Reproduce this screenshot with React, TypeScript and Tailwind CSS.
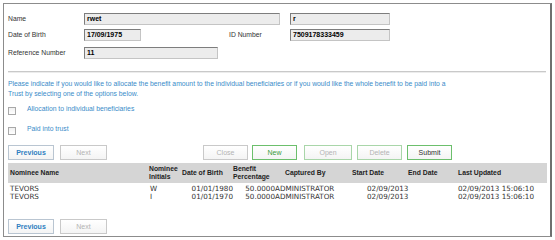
import { ReactNode } from 'react'

type Row = { name: string; initials: string; dob: string; pct: string; by: string; start: string; end: string; updated: string }

const rows: Row[] = [
  { name: 'TEVORS', initials: 'W', dob: '01/01/1980', pct: '50.0000', by: 'ADMINISTRATOR', start: '02/09/2013', end: '', updated: '02/09/2013 15:06:10' },
  { name: 'TEVORS', initials: 'I', dob: '01/01/1970', pct: '50.0000', by: 'ADMINISTRATOR', start: '02/09/2013', end: '', updated: '02/09/2013 15:06:10' },
]

const arial = "font-['Liberation_Sans',Arial,sans-serif]"
const verdana = "font-['DejaVu_Sans',Verdana,sans-serif]"

function Field({ value, w }: { value: string; w: string }) {
  return (
    <div
      className={`${w} h-[12px] border border-[#c4c4c4] border-t-[#7d7d7d] border-l-[#7d7d7d] bg-[#ececec] pl-[2px] text-[7px] font-bold leading-[10px] text-black`}
    >
      {value}
    </div>
  )
}

function Btn({ children, tone, w = 'w-[46px]' }: { children: ReactNode; tone: 'blue' | 'grey' | 'green' | 'pale' | 'dark'; w?: string }) {
  const styles = {
    blue: 'border-[#b9c5d1] text-[#2f7fc1] font-bold',
    grey: 'border-[#c9c9c9] text-[#b3b3b3]',
    green: 'border-[#6cbf6c] text-[#3d9b3d]',
    pale: 'border-[#a9d6a9] text-[#b3b3b3]',
    dark: 'border-[#6cbf6c] text-[#2e2e2e]',
  }[tone]
  return (
    <button
      type="button"
      className={`${w} h-[15px] border bg-gradient-to-b from-white to-[#f4f4f4] text-[7px] leading-[13px] ${styles}`}
    >
      {children}
    </button>
  )
}

function Check({ label, mt }: { label: string; mt: string }) {
  return (
    <div className={`flex items-start ${mt}`}>
      <span className="h-[8px] w-[8px] border border-[#a8a8a8] bg-gradient-to-b from-[#f0f0f0] to-white" />
      <span className="ml-[11px] -mt-[3px] text-[6.8px] leading-[9px] text-[#3a8cc9]">{label}</span>
    </div>
  )
}

export default function App() {
  return (
    <div className={`h-[240px] w-[555px] bg-white pl-[3px] pt-[3px] ${arial}`}>
      <div className="h-[234px] w-[549px] border border-[#8c8c8c] border-r-[#6f6f6f] border-r-2 px-[4px]">
        {/* applicant details */}
        <div className="pt-[9px] text-[6.8px] text-[#333333]">
          <div className="flex items-center">
            <span className="w-[76px]">Name</span>
            <Field value="rwet" w="w-[196px]" />
            <span className="w-[10px]" />
            <Field value="r" w="w-[100px]" />
          </div>
          <div className="mt-[4px] flex items-center">
            <span className="w-[76px]">Date of Birth</span>
            <Field value="17/09/1975" w="w-[57px]" />
            <span className="ml-[88px] w-[61px]">ID Number</span>
            <Field value="7509178333459" w="w-[100px]" />
          </div>
          <div className="mt-[6px] flex items-center">
            <span className="w-[76px]">Reference Number</span>
            <Field value="11" w="w-[134px]" />
          </div>
        </div>

        <div className="mt-[12px] h-[2px] border-t border-[#c9c9c9] bg-[#ececec]" />

        <p className="mt-[6px] text-[6.8px] leading-[9.5px] text-[#3a8cc9]">
          Please indicate if you would like to allocate the benefit amount to the individual beneficiaries or if you would like the whole benefit to be paid into a
          <br />
          Trust by selecting one of the options below.
        </p>

        <Check label="Allocation to individual beneficiaries" mt="mt-[9px]" />
        <Check label="Paid into trust" mt="mt-[12px]" />

        <div className="mt-[10px] flex">
          <Btn tone="blue">Previous</Btn>
          <span className="w-[6px]" />
          <Btn tone="grey" w="w-[47px]">Next</Btn>
          <span className="w-[96px]" />
          <Btn tone="grey" w="w-[45px]">Close</Btn>
          <span className="w-[4px]" />
          <Btn tone="green" w="w-[45px]">New</Btn>
          <span className="w-[7px]" />
          <Btn tone="pale" w="w-[48px]">Open</Btn>
          <span className="w-[5px]" />
          <Btn tone="pale" w="w-[45px]">Delete</Btn>
          <span className="w-[5px]" />
          <Btn tone="dark" w="w-[45px]">Submit</Btn>
        </div>

        {/* nominees */}
        <table className="mt-[3px] w-[539px] table-fixed border-collapse text-left">
          <colgroup>
            <col className="w-[141px]" />
            <col className="w-[33px]" />
            <col className="w-[51px]" />
            <col className="w-[42px]" />
            <col className="w-[77px]" />
            <col className="w-[56px]" />
            <col className="w-[50px]" />
            <col className="w-[89px]" />
          </colgroup>
          <thead>
            <tr className="h-[20px] bg-[#d5d5d5] text-[6.8px] font-bold leading-[8px] text-[#222222]">
              <th className="pl-[2px] align-middle">Nominee Name</th>
              <th className="align-middle">Nominee<br />Initials</th>
              <th className="align-middle">Date of Birth</th>
              <th className="align-middle">Benefit<br />Percentage</th>
              <th className="pl-[10px] align-middle">Captured By</th>
              <th className="align-middle">Start Date</th>
              <th className="align-middle">End Date</th>
              <th className="align-middle">Last Updated</th>
            </tr>
          </thead>
          <tbody className={`${verdana} text-[7.2px] leading-[7px] text-[#333333]`}>
            {rows.map((r, i) => (
              <tr key={i} className={i === 0 ? 'h-[9px] align-bottom' : 'h-[8px] align-bottom'}>
                <td className="pl-[2px] whitespace-nowrap">{r.name}</td>
                <td className="pl-[1px]">{r.initials}</td>
                <td className="text-right whitespace-nowrap">{r.dob}</td>
                <td className="text-right">{r.pct}</td>
                <td className="whitespace-nowrap">{r.by}</td>
                <td className="pl-[15px] whitespace-nowrap">{r.start}</td>
                <td>{r.end}</td>
                <td className="whitespace-nowrap">{r.updated}</td>
              </tr>
            ))}
          </tbody>
        </table>

        <div className="mt-[19px] flex">
          <Btn tone="blue">Previous</Btn>
          <span className="w-[6px]" />
          <Btn tone="grey" w="w-[47px]">Next</Btn>
        </div>
      </div>
    </div>
  )
}
